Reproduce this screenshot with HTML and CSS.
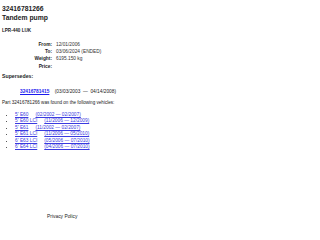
FILE: index.html
```html
<!DOCTYPE html>
<html lang="en">
<head>
    <meta charset="UTF-8">
    <title>32416781266 Tandem pump</title>
    <link rel="stylesheet" href="styles.css">
</head>
<body>
    <div class="page">
        <div class="part-no">32416781266</div>
        <h1 class="part-name">Tandem pump</h1>
        <div class="part-maker">LPR-440 LUK</div>

        <table class="info">
            <tr><th>From:</th><td>12/01/2006</td></tr>
            <tr><th>To:</th><td>03/06/2024 (ENDED)</td></tr>
            <tr><th>Weight:</th><td>6195.150 kg</td></tr>
            <tr><th>Price:</th><td></td></tr>
        </table>

        <div class="section-title">Supersedes:</div>
        <div class="supersedes">
            <a href="#">32416781415</a>
            <span class="dates">(03/03/2003 &nbsp;&mdash;&nbsp; 04/14/2008)</span>
        </div>

        <p class="found">Part 32416781266 was found on the following vehicles:</p>
        <ul class="vehicles">
            <li><a href="#">5' E60<span class="period">(02/2002 &mdash; 02/2007)</span></a></li>
            <li><a href="#">5' E60 LCI<span class="period">(11/2006 &mdash; 12/2009)</span></a></li>
            <li><a href="#">5' E61<span class="period">(11/2002 &mdash; 02/2007)</span></a></li>
            <li><a href="#">5' E61 LCI<span class="period">(11/2006 &mdash; 05/2010)</span></a></li>
            <li><a href="#">6' E63 LCI<span class="period">(05/2006 &mdash; 07/2010)</span></a></li>
            <li><a href="#">6' E64 LCI<span class="period">(04/2006 &mdash; 07/2010)</span></a></li>
        </ul>

        <div class="footer">Privacy Policy</div>
    </div>
</body>
</html>
```

FILE: styles.css
```css
body {
    margin: 0;
    font-family: "Liberation Sans", Arial, sans-serif;
    color: #222;
    background: #fff;
}

.page {
    padding: 4px 2px;
    font-size: 4.6px;
    line-height: 1.5;
}

.part-no {
    font-size: 6.8px;
    font-weight: bold;
    line-height: 9px;
}

.part-name {
    font-size: 6.8px;
    font-weight: bold;
    line-height: 9px;
    margin: 0 0 6px;
}

.part-maker {
    font-size: 4.6px;
    font-weight: bold;
    margin-bottom: 6px;
}

.info {
    border-collapse: collapse;
    margin-left: 30px;
    font-size: 4.8px;
}

.info th {
    text-align: right;
    font-weight: bold;
    padding: 0 4px 0 0;
    width: 20px;
    line-height: 7.3px;
}

.info td {
    padding: 0;
    color: #333;
    line-height: 7.3px;
}

.section-title {
    font-size: 5.2px;
    font-weight: bold;
    margin: 3px 0 7px;
}

.supersedes {
    padding-left: 18px;
    margin-bottom: 5px;
    font-size: 4.8px;
}

.supersedes a {
    color: #1a1aee;
    font-weight: bold;
    margin-right: 4px;
}

.found {
    margin: 0 0 5px;
}

.vehicles {
    margin: 0;
    padding-left: 13px;
    font-size: 4.8px;
}

.vehicles li {
    line-height: 6.4px;
}

.vehicles a {
    color: #3a3ae0;
}

.period {
    margin-left: 7px;
}

.footer {
    margin-top: 63px;
    padding-left: 45px;
    font-size: 4.9px;
}
```
